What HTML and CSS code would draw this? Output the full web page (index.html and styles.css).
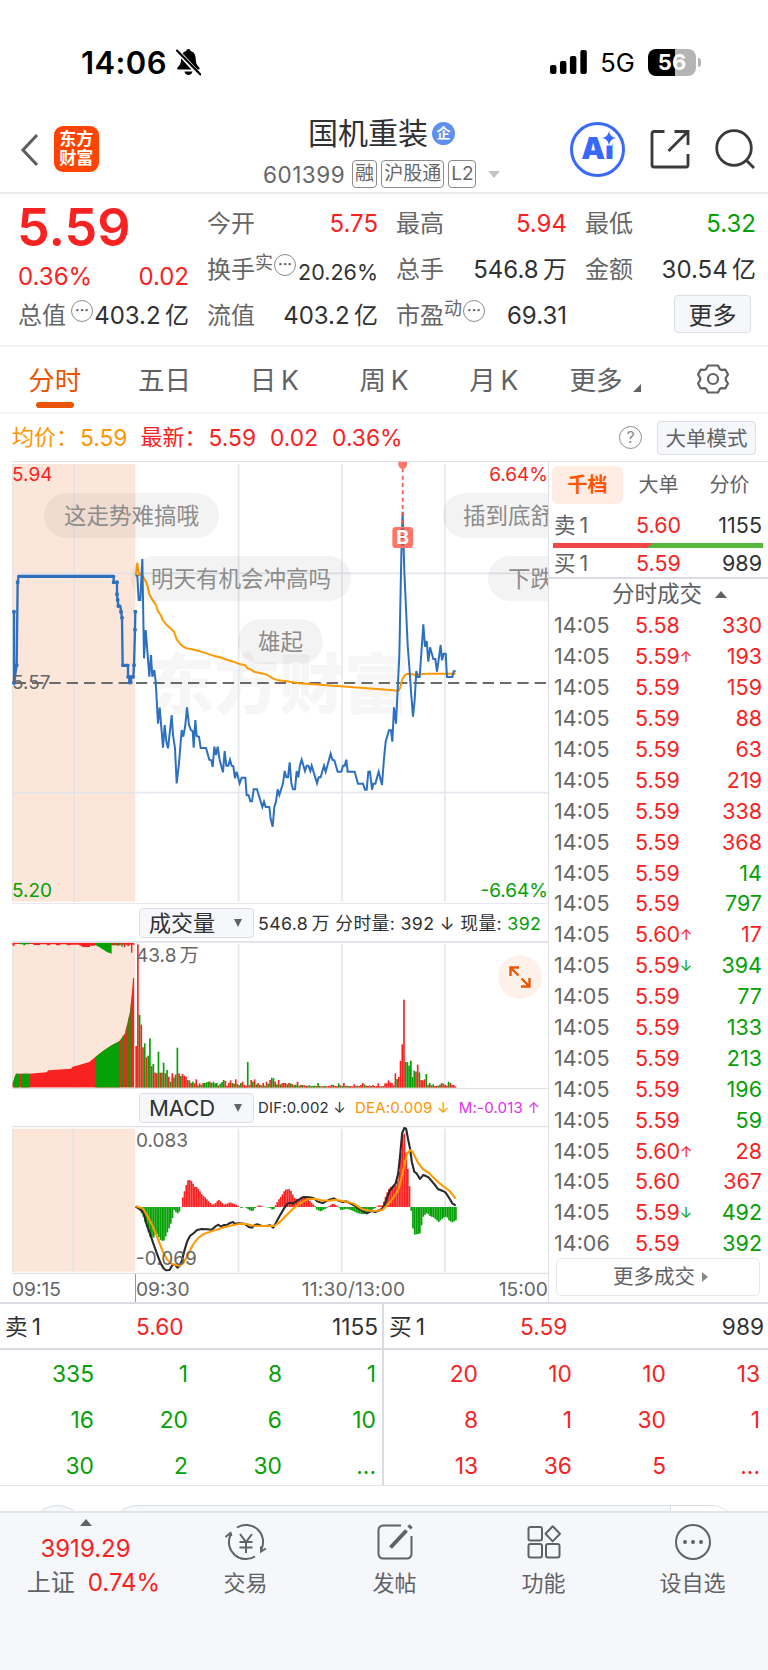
FILE: index.html
```
<!DOCTYPE html>
<html lang="zh-CN">
  <head>
    <meta charset="UTF-8" />
    <meta name="viewport" content="width=device-width, initial-scale=1.0" />
    <title>国机重装 601399</title>
    <link rel="stylesheet" href="styles.css" />
  </head>
  <body>
    <div class="status">
      <span class="time">14:06</span>
      <svg class="bell" width="27" height="28" viewBox="0 0 27 28">
        <path d="M13.5 1c1.3 0 2 .9 2.1 2 3.6 1 5 3.700 5.200 7.500.2 5.200 1.200 6.500 3.600 9 .8.9.4 2-.8 2H3.400c-1.200 0-1.600-1.100-.8-2 2.400-2.500 3.400-3.800 3.600-9C6.400 6.700 7.800 4 11.400 3c.1-1.100.8-2 2.100-2z" />
        <path d="M9.500 23.500h8c-.4 2.300-1.900 3.500-4 3.500s-3.600-1.200-4-3.500z" />
        <path d="M1 1.500 25 27.500" stroke="#fff" stroke-width="4.500" />
        <path d="M2 2.500 25.500 26.500" stroke="#000" stroke-width="2.200" stroke-linecap="round" />
      </svg>
      <svg class="signal" width="38" height="24" viewBox="0 0 38 24">
        <rect x="0" y="15" width="6.500" height="9" rx="2" />
        <rect x="10" y="11" width="6.500" height="13" rx="2" />
        <rect x="20" y="6" width="6.500" height="18" rx="2" />
        <rect x="30.500" y="0" width="6.500" height="24" rx="2" />
      </svg>
      <span class="net">5G</span>
      <span class="battery">56</span>
      <i class="nub"></i>
    </div>

    <header>
      <svg class="back" width="20" height="36" viewBox="0 0 20 36"><path d="M17 3 3 18l14 15" /></svg>
      <div class="logo"><span>东方</span><span>财富</span></div>
      <div class="title">
        <div class="name">国机重装<em>企</em></div>
        <div class="code">601399<b>融</b><b>沪股通</b><b>L2</b><i></i></div>
      </div>
      <div class="tools">
        <div class="ai">
          Ai
          <svg width="16" height="16" viewBox="-1 -1 16 16"><path d="M7 0Q8 6 14 7 8 8 7 14 6 8 0 7 6 6 7 0z" /></svg>
        </div>
        <svg class="line" width="40" height="40" viewBox="0 0 40 40">
          <path d="M14.500 2.500H4a2 2 0 0 0-2 2V36a2 2 0 0 0 2 2h32a2 2 0 0 0 2-2V25M24.500 2.500H38V16M38 2.500 18.500 22" />
        </svg>
        <svg class="line search" width="42" height="42" viewBox="0 0 42 42">
          <circle cx="19" cy="20" r="17.300" /><path d="m31 32 8 8" />
        </svg>
      </div>
    </header>

    <section class="quote">
      <div class="col">
        <div class="big">5.59</div>
        <div class="pair change"><span>0.36%</span><span>0.02</span></div>
        <div class="pair"><label>总值<i class="dots ml">···</i></label><span>403.2&thinsp;亿</span></div>
      </div>
      <div class="col">
        <div class="pair"><label>今开</label><span class="red">5.75</span></div>
        <div class="pair"><label>换手<sup>实</sup><i class="dots">···</i></label><span class="small">20.26%</span></div>
        <div class="pair"><label>流值</label><span>403.2&thinsp;亿</span></div>
      </div>
      <div class="col">
        <div class="pair"><label>最高</label><span class="red">5.94</span></div>
        <div class="pair"><label>总手</label><span>546.8&thinsp;万</span></div>
        <div class="pair"><label>市盈<sup>动</sup><i class="dots">···</i></label><span>69.31</span></div>
      </div>
      <div class="col">
        <div class="pair"><label>最低</label><span class="green">5.32</span></div>
        <div class="pair"><label>金额</label><span>30.54&thinsp;亿</span></div>
        <div class="pair end"><button class="btn more">更多</button></div>
      </div>
    </section>

    <nav class="tabs">
      <a class="active">分时</a>
      <a>五日</a>
      <a>日&thinsp;K</a>
      <a>周&thinsp;K</a>
      <a>月&thinsp;K</a>
      <a>更多<i class="corner"></i></a>
      <a>
        <svg width="32" height="30" viewBox="0 0 32 30">
          <path d="M11 1.500h10l1.800 3.600 1.400.8 4.200-.2 2.600 4.800-2.200 3.300v2.400l2.200 3.300-2.600 4.800-4.200-.2-1.400.8L21 28.500H11l-1.800-3.600-1.400-.8-4.200.2L1 19.500l2.200-3.300v-2.400L1 10.500l2.600-4.800 4.200.2 1.400-.8z" />
          <circle cx="16" cy="15" r="5" />
        </svg>
      </a>
    </nav>

    <div class="info">
      <span class="orange">均价：</span><span class="orange v1">5.59</span>
      <span class="red">最新：</span><span class="red v2">5.59</span><span class="red v3">0.02</span><span class="red v4">0.36%</span>
      <i class="help">?</i>
      <button class="btn mode">大单模式</button>
    </div>

    <main>
      <div class="charts">
        <div class="chart price">
          <svg width="537" height="443" viewBox="36 18 1611 1329">
            <path class="frame" d="M36 19H1647M36 1347H1647" />
            <rect class="auction" x="36" y="27" width="370" height="1313" />
            <text class="mark" x="448" y="758">东方财富</text>
            <path class="grid" d="M37 27V1340M222 27V1340M716 27V1340M1026 27V1340M1335 27V1340M37 355H1645M37 1013H1645" />
            <path class="zero" d="M44 684H1645" />
            <polyline class="avg" points="407,362 412,325 417,360 421,357 427,362 432,370 438,380 443,395 448,418 458,436 468,450 473,467 483,482 488,495 500,510 510,519 522,530 530,553 540,566 550,575 560,580 575,583 600,589 640,602 665,608 675,613 700,620 722,628 736,631 742,640 752,643 762,650 790,656 800,659 820,671 835,676 860,679 897,685 940,688 1040,695 1090,699 1180,706 1195,708 1200,700 1206,675 1212,664 1220,657 1228,656 1245,659 1280,656 1367,656" />
            <polyline class="now pre" points="42,470 42,684 50,631 53,382 56,364 341,364 341,382 351,382 351,418 353,435 355,453 361,453 363,470 366,488 368,631 384,631 384,666 388,666 388,684 393,684 393,666 400,666 402,631 405,524 406,470" />
            <path class="thick" d="M56 364H341M368 631H384M384 666H400M388 682H393" />
            <path class="dot" d="M42 470h0M42 684h0M50 631h0M53 382h0M341 382h0M351 382h0M351 418h0M353 435h0M355 453h0M363 470h0M366 488h0M402 631h0M405 524h0M406 470h0" />
            <polyline class="now" points="407,362 412,362 416,435 421,435 427,312 432,610 437,525 443,600 448,665 453,600 457,665 463,645 467,680 474,806 479,758 489,878 494,810 499,860 504,880 509,835 515,780 519,840 525,880 530,985 537,925 545,825 550,845 556,810 561,757 567,810 573,826 578,828 581,878 586,795 590,843 597,845 602,879 618,879 628,914 634,916 638,936 643,875 648,900 653,875 659,915 669,952 674,888 679,932 685,932 690,914 695,932 700,934 705,970 710,950 719,985 725,968 736,968 740,1021 746,1021 751,1039 756,1039 761,1003 771,1003 787,1056 792,1040 797,1056 808,1056 812,1092 818,1115 823,1056 828,1040 833,1003 838,1020 849,985 854,948 859,967 864,967 869,922 874,985 879,1003 885,1003 890,948 895,967 900,930 905,914 915,948 920,932 925,932 931,948 935,932 946,968 951,985 956,967 962,967 972,932 977,950 992,896 997,914 1003,916 1013,950 1024,950 1029,932 1034,932 1039,914 1043,950 1064,950 1074,986 1089,986 1095,1004 1100,1004 1105,950 1110,950 1116,1004 1120,986 1126,986 1136,950 1146,990 1152,910 1157,860 1167,826 1173,826 1177,860 1182,757 1188,806 1198,600 1204,300 1208,170 1213,350 1223,570 1229,650 1233,710 1239,785 1244,735 1249,648 1253,666 1259,666 1270,508 1275,575 1280,558 1285,620 1290,577 1300,612 1306,612 1311,650 1322,570 1326,616 1331,596 1337,596 1341,666 1357,666 1361,649 1367,649" />
            <g class="buy">
              <path d="M1195 20h26v8a13 13 0 0 1-26 0z" />
              <path class="stem" d="M1208 40V216" />
              <rect x="1177" y="216" width="62" height="63" rx="10" />
              <path class="spike" d="M1208 220V279" />
              <text x="1208" y="268">B</text>
            </g>
          </svg>
          <span class="lab t red">5.94</span>
          <span class="lab m">5.57</span>
          <span class="lab b green">5.20</span>
          <span class="lab t r red">6.64%</span>
          <span class="lab b r green">-6.64%</span>
          <span class="bubble b1">这走势难搞哦</span>
          <span class="bubble b2">明天有机会冲高吗</span>
          <span class="bubble b3">雄起</span>
          <span class="bubble b4">插到底舒</span>
          <span class="bubble b5">下跌</span>
        </div>

        <div class="bar">
          <div class="select">成交量<i></i></div>
          <span class="txt">546.8&thinsp;万 分时量: 392 ↓ 现量: <span class="green">392</span></span>
        </div>

        <div class="chart vol">
          <svg width="537" height="148" viewBox="36 123 1611 444">
            <defs>
              <clipPath id="hill">
                <path d="M37 563V550L48 521H88L140 517 145 511 213 506 218 500 235 496 268 486 287 470 310 452 335 436 358 424 375 400 383 365 390 335 393 305 397 265 399 233H403V563z" />
              </clipPath>
            </defs>
            <rect class="auction" x="36" y="132" width="370" height="431" />
            <path class="grid" d="M37 132V563M222 132V563M716 132V563M1026 132V563M1335 132V563" />
            <g clip-path="url(#hill)">
              <rect class="up" x="36" y="200" width="370" height="363" />
              <path class="down" d="M42 500h15v63H42zM64 500h24v63H64zM286 400h74v163H286zM366 300h3v263h-3zM376 300h3v263h-3zM384 300h2v263h-2zM391 250h3v313h-3z" />
            </g>
            <path class="up" d="M37 128H403V134H397V158H393V134H388V138H382V134H376V142H371V134H362V136H335V134H286V137H270V141H245V137H238V134H212V136H200V133H180V136H168V133H150V136H140V133H120V135H100V132H44V137H38z" />
            <path class="down" d="M286 128H335V161L322 157 308 148 296 140 286 135zM60 128H88V133H76V136H70V133H60zM340 128H344V136H340zM352 128H356V138H352zM364 128H368V140H364z" />
            <g id="vol-bars"></g>
            <path class="frame thick-frame" d="M36 125.500H1647" />
            <path class="frame" d="M36 566H1647" />
          </svg>
          <span class="lab v">43.8&thinsp;万</span>
          <span class="expand">
            <svg width="24" height="24" viewBox="0 0 24 24"><path d="M2.500 11V2.500H11M2.500 2.500l8 8M13 21.500h8.500V13M21.500 21.500l-8-8" /></svg>
          </span>
        </div>

        <div class="bar">
          <div class="select">MACD<i></i></div>
          <span class="tiny">DIF:0.002 ↓</span>
          <span class="tiny orange">DEA:0.009 ↓</span>
          <span class="tiny pink">M:-0.013 ↑</span>
        </div>

        <div class="chart macd">
          <svg width="537" height="148" viewBox="34 108 1503 444" preserveAspectRatio="none">
            <path class="frame" d="M34 109.500H1537M34 550H1537" />
            <rect class="auction" x="34" y="116" width="345" height="429" />
            <path class="grid" d="M35 116V545M206 116V545M668 116V545M957 116V545M1246 116V545" />
            <g id="macd-bars"></g>
            <polyline class="dif" points="380,350 385,353 395,360 402,368 410,400 420,430 430,462 440,492 450,520 458,535 465,541 475,540 483,525 490,524 497,533 503,528 510,510 517,480 524,455 532,438 542,430 552,420 565,417 580,418 593,419 605,408 612,404 618,410 628,405 635,405 642,400 652,396 658,401 668,400 685,401 697,411 706,413 715,404 722,403 733,408 745,408 757,406 765,413 773,398 783,378 795,356 805,341 812,338 820,341 835,330 850,321 865,322 878,324 890,335 903,339 910,336 920,330 935,325 945,331 960,336 970,334 990,345 1010,360 1027,370 1040,363 1050,366 1065,360 1075,350 1083,325 1090,305 1100,290 1108,280 1115,250 1120,200 1126,130 1132,114 1137,116 1143,150 1148,175 1153,215 1160,245 1166,250 1176,267 1185,255 1192,258 1200,262 1210,275 1217,284 1226,297 1240,303 1248,308 1258,325 1267,341 1276,346" />
            <polyline class="avg" points="380,348 390,352 400,355 410,372 425,402 440,440 455,482 468,508 478,520 490,525 503,527 513,520 525,498 540,465 555,444 570,432 590,425 610,418 640,408 670,402 690,402 710,407 740,408 768,408 785,395 800,378 820,357 840,340 860,328 880,326 900,331 920,332 940,329 970,335 990,341 1015,358 1035,362 1050,363 1070,360 1085,345 1100,325 1115,300 1125,260 1132,225 1140,190 1148,180 1155,185 1170,218 1185,238 1200,248 1220,270 1240,288 1258,302 1276,326" />
          </svg>
          <span class="lab v">0.083</span>
          <span class="lab v low">-0.069</span>
        </div>

        <div class="axis"><span>09:15</span><span>09:30</span><span>11:30/13:00</span><span>15:00</span></div>
      </div>

      <aside>
        <div class="side-tabs"><a class="active">千档</a><a>大单</a><a>分价</a></div>
        <div class="lv"><span>卖&thinsp;1</span><span class="red">5.60</span><span>1155</span></div>
        <div class="ratio"></div>
        <div class="lv buy1"><span>买&thinsp;1</span><span class="red">5.59</span><span>989</span></div>
        <div class="deal-title">分时成交<i></i></div>
        <div id="deals"></div>
        <button class="more-deals">更多成交<i></i></button>
      </aside>
    </main>

    <section class="book">
      <div class="half">
        <div class="head"><span>卖&thinsp;1</span><span class="red">5.60</span><span>1155</span></div>
        <div class="cells green">
          <span>335</span><span>1</span><span>8</span><span>1</span>
          <span>16</span><span>20</span><span>6</span><span>10</span>
          <span>30</span><span>2</span><span>30</span><span>...</span>
        </div>
      </div>
      <div class="half">
        <div class="head"><span>买&thinsp;1</span><span class="red">5.59</span><span>989</span></div>
        <div class="cells red">
          <span>20</span><span>10</span><span>10</span><span>13</span>
          <span>8</span><span>1</span><span>30</span><span>1</span>
          <span>13</span><span>36</span><span>5</span><span>...</span>
        </div>
      </div>
    </section>

    <div class="peek"><div class="round"></div><div class="pill"><i></i></div></div>

    <footer>
      <div class="index">
        <i></i>
        <div class="num">3919.29</div>
        <div class="name-row">上证<span>0.74%</span></div>
      </div>
      <div class="item">
        <svg width="44" height="40" viewBox="0 0 44 40">
          <path d="M13 5.500A17 17 0 0 1 37.500 27M31 34.500A17 17 0 0 1 6.500 13M1.500 15l5-4 1 3M37 24.500v5l5-3" />
          <path d="M16 12l6 8 6-8M22 20v11M15.500 20h13M15.500 25.500h13" />
        </svg>
        交易
      </div>
      <div class="item">
        <svg width="40" height="40" viewBox="0 0 40 40">
          <path d="M26 3.500H8a4.500 4.500 0 0 0-4.500 4.500v24A4.500 4.500 0 0 0 8 36.500h24a4.500 4.500 0 0 0 4.500-4.500V14" />
          <path d="M15.500 25.500 31.500 8.500" stroke-width="4" /><path d="m34 6 2-2.200" stroke-width="4.500" />
        </svg>
        发帖
      </div>
      <div class="item">
        <svg width="40" height="40" viewBox="0 0 40 40">
          <rect x="4.500" y="5" width="13.500" height="13.500" rx="2" /><rect x="4.500" y="22" width="13.500" height="13.500" rx="2" /><rect x="22" y="22" width="13.500" height="13.500" rx="2" />
          <path d="M28.700 4.200 36 11.800l-7.300 7.600-7.200-7.600z" stroke-linejoin="round" />
        </svg>
        功能
      </div>
      <div class="item">
        <svg width="40" height="40" viewBox="0 0 40 40">
          <circle cx="20" cy="20" r="17" />
          <path d="M12 20h.01M20 20h.01M28 20h.01" stroke-width="4" stroke-linecap="round" />
        </svg>
        设自选
      </div>
    </footer>
    <script src="script.js"></script>
  </body>
</html>
```
FILE: styles.css
```
* {
  box-sizing: border-box;
}
body {
  margin: 0;
  width: 768px;
  height: 1670px;
  overflow: hidden;
  background: #fff;
  color: #303133;
  font-family: Inter, "Noto Sans CJK SC", sans-serif;
  font-size: 24px;
}
i,
em {
  font-style: normal;
}
button {
  font-family: inherit;
  padding: 0 0 3px;
}
.red {
  color: #f82222;
}
.green {
  color: #05a005;
}
.orange {
  color: #ff9500;
}
.pink {
  color: #e030e8;
}

/* status bar */
.status {
  height: 104px;
  padding: 20px 67px 0 81px;
  display: flex;
  align-items: center;
  color: #000;
}
.time {
  width: 94px;
  font-size: 31px;
  font-weight: 600;
  letter-spacing: 0.4px;
}
.signal {
  margin-left: 349px;
}
.net {
  width: 47px;
  padding-left: 12px;
  font-size: 25.500px;
}
.battery {
  margin-left: 13px;
  width: 48px;
  height: 27px;
  flex: none;
  border-radius: 8px;
  background: linear-gradient(90deg, #000 56%, #b4b4b4 56%);
  color: #fff;
  font-size: 22px;
  font-weight: 700;
  line-height: 27px;
  text-align: center;
}
.nub {
  margin-left: 2px;
  width: 3px;
  height: 9px;
  border-radius: 0 3px 3px 0;
  background: #b4b4b4;
}

/* title bar */
header {
  height: 90px;
  display: flex;
  border-bottom: 2px solid #ebebeb;
}
.back {
  margin: 28px 0 0 20px;
  fill: none;
  stroke: #5c5c5c;
  stroke-width: 3;
}
.logo {
  margin: 22px 0 0 13.500px;
  width: 45.500px;
  height: 46px;
  padding-top: 4px;
  border-radius: 9px;
  background: #ff4400;
  color: #fff;
  font-size: 17px;
  font-weight: 700;
  line-height: 19px;
  text-align: center;
}
.logo span {
  display: block;
}
.title {
  margin-left: 164px;
  width: 289px;
}
.name {
  height: 40px;
  margin: 9px 0 1px 45px;
  display: flex;
  align-items: center;
  font-size: 30px;
  line-height: 40px;
}
.name em {
  margin-left: 4px;
  width: 23px;
  height: 23px;
  border-radius: 50%;
  background: #5f8ff0;
  color: #fff;
  font-size: 14px;
  font-weight: 700;
  line-height: 22px;
  text-align: center;
}
.code {
  height: 40px;
  display: flex;
  align-items: center;
  color: #666;
  font-size: 22.500px;
  letter-spacing: 0.5px;
}
.code b {
  height: 28px;
  margin-left: 4px;
  padding: 0 2px;
  border: 1.500px solid #8c8c8c;
  border-radius: 4px;
  font-size: 19px;
  font-weight: 400;
  letter-spacing: 0;
  line-height: 25px;
}
.code b:first-of-type {
  margin-left: 7px;
}
.code i {
  margin-left: 12px;
  border: 6.500px solid transparent;
  border-top: 7px solid #c4c4c4;
  border-bottom: 0;
}
.tools {
  margin-left: 18px;
  height: 90px;
  display: flex;
  align-items: center;
}
.ai {
  position: relative;
  width: 55px;
  height: 55px;
  border: 3.500px solid #3868ff;
  border-radius: 50%;
  color: #3868ff;
  font-size: 30px;
  font-weight: 900;
  line-height: 47px;
  text-align: center;
}
.ai svg {
  position: absolute;
  left: 28px;
  top: 5px;
  overflow: visible;
  fill: #3868ff;
  stroke: #fff;
  stroke-width: 6;
  paint-order: stroke;
}
.line {
  margin-left: 25px;
  fill: none;
  stroke: #3a3a3c;
  stroke-width: 2.800;
}
.search {
  margin-left: 25px;
}

/* quote numbers */
.quote {
  height: 153px;
  padding: 7px 12px 0 18px;
  display: grid;
  grid-template-columns: repeat(4, 171px);
  justify-content: space-between;
  border-bottom: 2px solid #f3f3f3;
}
.pair {
  height: 46px;
  display: flex;
  align-items: center;
  justify-content: space-between;
  white-space: nowrap;
  line-height: 30px;
}
.pair label {
  display: flex;
  align-items: center;
  color: #666;
}
.pair sup {
  font-size: 18px;
  line-height: 18px;
  margin-top: -14px;
  vertical-align: 0;
}
.pair .small {
  padding-top: 4px;
  font-size: 21.500px;
}
.pair.end {
  justify-content: flex-end;
}
.dots {
  width: 22px;
  height: 22px;
  margin: -10px 0 0 1px;
  border: 1.500px solid #8c8c8c;
  border-radius: 50%;
  font-size: 14px;
  font-weight: 700;
  line-height: 18px;
  text-align: center;
}
.dots.ml {
  margin-left: 5px;
}
.big {
  height: 54px;
  margin: 0 0 5px -1px;
  color: #f82222;
  font-size: 52px;
  font-weight: 600;
  line-height: 54px;
}
.change {
  height: 33px;
  color: #f82222;
}
.btn {
  border: 1.500px solid #dcdee4;
  border-radius: 4px;
  background: #f6f7fa;
  color: #303133;
}
.more {
  width: 77px;
  height: 38px;
  margin: -5px 5px 0 0;
  padding-bottom: 4px;
  font-size: 24px;
}

/* period tabs */
.tabs {
  height: 67px;
  display: flex;
  border-bottom: 2px solid #f3f3f3;
}
.tabs a {
  flex: 1;
  position: relative;
  display: flex;
  align-items: center;
  justify-content: center;
  padding-bottom: 2px;
  color: #606266;
  font-size: 26.5px;
}
.tabs .active {
  color: #ea5504;
}
.tabs .active::after {
  content: "";
  position: absolute;
  left: 36px;
  bottom: 4px;
  width: 38px;
  height: 6px;
  border-radius: 3px;
  background: #ea5504;
}
.corner {
  margin: 19px -4px 0 11px;
  border-left: 8px solid transparent;
  border-bottom: 8px solid #606266;
}
.tabs svg {
  fill: none;
  stroke: #606266;
  stroke-width: 2.200;
  stroke-linejoin: round;
}

.info {
  height: 47px;
  padding: 0 12px;
  display: flex;
  align-items: center;
  font-size: 22px;
  line-height: 30px;
}
.info > span {
  margin-top: -2px;
}
.info .v1,
.info .v2,
.info .v3,
.info .v4 {
  margin-top: 0;
  font-size: 22.800px;
}
.v1 {
  margin: 0 13px 0 2px;
}
.v2 {
  margin: 0 14px 0 2px;
}
.v3 {
  margin-right: 14px;
}
.help {
  margin-left: auto;
  width: 23px;
  height: 23px;
  border: 1.500px solid #8c8c8c;
  border-radius: 50%;
  color: #8c8c8c;
  font-size: 16px;
  line-height: 20px;
  text-align: center;
}
.mode {
  margin-left: 15px;
  width: 99px;
  height: 34px;
  color: #606266;
  font-size: 20.500px;
}

/* charts */
main {
  height: 841px;
  display: flex;
}
.charts {
  width: 549px;
  padding-left: 12px;
  border-right: 1.500px solid #dddfe5;
}
.chart {
  position: relative;
  overflow: hidden;
}
.chart > svg {
  display: block;
}
.price {
  height: 443px;
}
.vol,
.macd {
  height: 148px;
}
.frame {
  stroke: #dfe1e8;
  stroke-width: 4;
}
.thick-frame {
  stroke-width: 6;
}
.auction {
  fill: #fce6da;
}
.grid {
  stroke: #dfe4ec;
  stroke-width: 5;
  opacity: 0.8;
}
.zero {
  stroke: #6a6a6a;
  stroke-width: 6;
  stroke-dasharray: 34 18;
}
.mark {
  font-size: 195px;
  font-weight: 900;
  fill: #f6f6f7;
}
.avg,
.now,
.dif {
  fill: none;
  stroke: #ff9900;
  stroke-width: 6;
  stroke-linejoin: round;
}
.now {
  stroke: #2c70bf;
  stroke-linejoin: miter;
}
.dif {
  stroke: #2a2a2a;
}
.pre {
  stroke-width: 7;
}
.thick {
  stroke: #2c70bf;
  stroke-width: 10;
  stroke-linecap: round;
}
.dot {
  stroke: #2c70bf;
  stroke-width: 12;
  stroke-linecap: round;
}
.buy {
  fill: #ff7666;
}
.buy .stem {
  stroke: #f4544a;
  stroke-width: 5;
  stroke-dasharray: 12 10;
}
.buy .spike {
  stroke: #8b3a66;
  stroke-width: 11;
  stroke-dasharray: 12 8;
  opacity: 0.6;
}
.buy text {
  fill: #fff;
  font-size: 58px;
  font-weight: 700;
  text-anchor: middle;
}
.up {
  fill: #f82222;
}
.down {
  fill: #05a005;
}
.lab {
  position: absolute;
  left: 0;
  color: #666;
  font-size: 19px;
  line-height: 20px;
}
.lab.red {
  color: #f82222;
}
.lab.green {
  color: #05a005;
}
.t {
  top: 4px;
}
.m {
  top: 212px;
}
.b {
  top: 420px;
}
.lab.r {
  left: auto;
  right: 0;
}
.lab.v {
  left: 124px;
  top: 5px;
}
.lab.low {
  top: 123px;
}
.bubble {
  position: absolute;
  height: 45px;
  padding: 0 20px;
  border-radius: 23px;
  background: rgba(80, 80, 80, 0.07);
  color: #8c8c8c;
  font-size: 22.500px;
  line-height: 46px;
  white-space: nowrap;
}
.b1 {
  left: 32px;
  top: 32px;
}
.b2 {
  left: 119px;
  top: 95px;
}
.b3 {
  left: 226px;
  top: 158px;
}
.b4 {
  left: 431px;
  top: 32px;
}
.b5 {
  left: 476px;
  top: 95px;
}
.bar {
  height: 37px;
  padding-left: 127px;
  display: flex;
  align-items: center;
  white-space: nowrap;
}
.select {
  width: 115px;
  height: 30px;
  margin-right: 4px;
  padding: 0 11px 0 9px;
  flex: none;
  display: flex;
  align-items: center;
  justify-content: space-between;
  border: 1.500px solid #dcdee4;
  border-radius: 4px;
  background: #f6f7fa;
  font-size: 22px;
  line-height: 28px;
}
.select i {
  border: 4.500px solid transparent;
  border-top: 8px solid #606266;
  border-bottom: 0;
}
.txt {
  margin-top: -2px;
  font-size: 17.800px;
  letter-spacing: 0.350px;
}
.tiny {
  margin-right: 9px;
  font-size: 15px;
  letter-spacing: 0.2px;
}
.expand {
  position: absolute;
  right: 6px;
  top: 14px;
  width: 44px;
  height: 44px;
  padding: 10px;
  border-radius: 50%;
  background: #fef1ea;
}
.expand svg {
  display: block;
  fill: none;
  stroke: #ea5504;
  stroke-width: 2.400;
}
.axis {
  height: 28px;
  display: flex;
  color: #666;
  font-size: 19.200px;
  line-height: 30px;
}
.axis span:first-child {
  width: 124px;
  border-right: 1.500px solid #999;
}
.axis span:nth-child(3) {
  margin-left: auto;
  margin-right: auto;
  padding-left: 19px;
  letter-spacing: 0.2px;
}

/* right side list */
aside {
  flex: 1;
  border-top: 1px solid #e2e4ea;
}
.side-tabs {
  height: 46px;
  padding: 4px 0 0 3px;
  display: flex;
}
.side-tabs a {
  width: 71px;
  height: 38px;
  color: #606266;
  font-size: 20px;
  line-height: 38px;
  text-align: center;
}
.side-tabs .active {
  border-radius: 6px;
  background: #ffece3;
  color: #ff5500;
  font-weight: 700;
}
.lv {
  height: 35px;
  padding: 0 6px 1px 5px;
  display: grid;
  grid-template-columns: 82px 60px 1fr;
  align-items: center;
  color: #606266;
  font-size: 21.500px;
  line-height: 30px;
}
.lv span:last-child {
  color: #303133;
  text-align: right;
}
.ratio {
  height: 5px;
  margin: 0 5px 0 4px;
  background: linear-gradient(130deg, #ee4848 46.300%, #58b83e 46.300%);
}
.buy1 {
  height: 29px;
  padding-bottom: 0;
}
.deal-title {
  height: 33px;
  padding: 0 0 1px 63px;
  display: flex;
  align-items: center;
  border-top: 2px solid #d9dbe2;
  color: #606266;
  font-size: 22.500px;
  line-height: 28px;
}
.deal-title i {
  margin: 1px 0 0 13px;
  border: 6px solid transparent;
  border-bottom: 7px solid #606266;
  border-top: 0;
}
.deal {
  height: 30.900px;
  padding: 0 6px 0 5px;
  display: grid;
  grid-template-columns: 81px 61px 1fr;
  align-items: center;
  font-size: 21.500px;
  white-space: nowrap;
}
.deal .clock {
  color: #666;
}
.deal span:last-child {
  text-align: right;
}
.deal small {
  font-size: 15px;
  vertical-align: 2px;
}
.more-deals {
  display: flex;
  width: 204px;
  height: 38px;
  margin: -1px 0 0 7px;
  padding-left: 56px;
  align-items: center;
  border: 1.500px solid #e8e8ea;
  border-radius: 5px;
  background: #fff;
  color: #606266;
  font-size: 20.500px;
}
.more-deals i {
  margin: 3px 0 0 7px;
  border: 5px solid transparent;
  border-left: 6px solid #888;
  border-right: 0;
}

/* order book */
.book {
  height: 184px;
  display: flex;
  border-top: 2px solid #d9dbe2;
  border-bottom: 1.500px solid #e2e4ea;
}
.half {
  width: 384px;
}
.half:first-child {
  border-right: 2px solid #d9dbe2;
}
.head {
  height: 46px;
  padding: 1px 4px 0 5px;
  display: grid;
  grid-template-columns: 131px 100px 1fr;
  align-items: center;
  border-bottom: 2px solid #d9dbe2;
  font-size: 22.700px;
  line-height: 30px;
}
.head span:last-child {
  text-align: right;
}
.cells {
  display: grid;
  grid-template-columns: repeat(4, 94px);
  grid-auto-rows: 46px;
  align-items: center;
  text-align: right;
  font-size: 22.800px;
  line-height: 27px;
}
.peek {
  height: 25px;
  padding: 19px 29px 0;
  display: flex;
  gap: 23px;
  overflow: hidden;
}
.peek .round {
  width: 57px;
  height: 57px;
  flex: none;
  border: 1.500px solid #dcdee4;
  border-radius: 50%;
  background: #f6f7fa;
}
.peek .pill {
  width: 630px;
  height: 57px;
  border: 1.500px solid #dcdee4;
  border-radius: 29px;
  background: #f6f7fa;
  overflow: hidden;
}
.pill i {
  display: block;
  height: 57px;
  margin-left: 560px;
  border-left: 1.500px solid #dcdee4;
  background: #fff;
}

/* bottom menu */
footer {
  height: 160px;
  display: flex;
  border-top: 2px solid #e3e4e7;
  background: #f6f7fa;
  color: #606266;
}
.index {
  width: 171px;
  line-height: 34px;
  text-align: center;
}
.index > i {
  display: block;
  width: 12px;
  margin: 6px auto 6px;
  border: 6px solid transparent;
  border-bottom: 7px solid #606266;
  border-top: 0;
}
.index .num,
.index span {
  color: #f82222;
}
.index .name-row {
  padding-left: 16px;
}
.index span {
  margin-left: 13px;
}
.item {
  width: 149px;
  padding-top: 9px;
  display: flex;
  flex-direction: column;
  align-items: center;
  font-size: 22px;
  line-height: 42px;
}
.item svg {
  fill: none;
  stroke: #606266;
  stroke-width: 2;
}
```
FILE: script.js
```
// height of each minute bar, minus = green
const volumes = [
  125, 430, -218, 189, 121, -133, 91, -96, -148, 65, -71, 45, 43, -108, 45, -45, -75, 43, -53, 33, -18, 43, -31, 39, -120, 43,
  -35, 41, 36, 33, 23, -22, 14, -18, 13, 25, -7, 13, -9, 14, -14, -16, -18, 18, -14, -18, -13, -14, 7, -12, -17, -23, 20, 6,
  14, 22, -14, 12, 25, -11, 7, -14, 18, 9, 6, -77, 8, 23, -18, 25, -10, 14, -9, 7, 14, -6, 18, -12, 23, -30, -28, 18, -10, 23,
  -10, 13, 14, 14, -10, 14, -13, 11, -7, -9, 18, -6, 8, -8, 7, 6, -6, -7, 5, -5, -6, 5, -14, 5, -4, 5, -5, 4, 5, 6, -9, 8, 5,
  5, -13, 7, -5, 14, -5, 6, -5, 5, 4, 10, -5, 6, 5, 8, 14, -10, 6, 5, 7, -5, 8, 5, 5, 13, 4, -5, 5, 13, 13, 22, 16, 14, 7,
  43, -26, 32, 81, 130, 264, -77, -77, -66, -81, -32, -51, 48, 69, -46, 23, 22, 25, -41, 8, -14, 7, -10, 5, 6, -6, 9, -14, 12,
  8, 6, -18, 14, 8, 8, 4,
];

// [x, height] turning points of the macd histogram
const macd = [
  [380, 0], [390, -8], [400, -25], [410, -58], [420, -90], [430, -92], [438, -78], [450, -100], [458, -103], [465, -85],
  [475, -60], [482, -38], [488, -8], [494, -18], [500, -20], [507, 0], [512, 30], [520, 60], [525, 80], [532, 81], [538, 76],
  [545, 60], [552, 60], [565, 38], [575, 28], [585, 16], [595, 6], [605, 13], [612, 22], [620, 15], [627, 7], [645, 14],
  [665, 5], [675, -3], [685, 0], [700, -10], [707, -14], [713, -4], [725, 6], [735, 1], [755, -2], [765, -10], [771, 5],
  [780, 22], [790, 37], [798, 52], [812, 54], [818, 40], [826, 24], [835, 24], [845, 32], [855, 32], [865, 20], [875, 10],
  [882, 2], [887, -8], [897, -13], [912, -5], [918, 0], [932, 11], [942, 5], [948, 0], [955, -10], [970, -5], [985, -10],
  [1000, -18], [1015, -22], [1030, -17], [1050, -3], [1060, 5], [1070, 5], [1075, 18], [1082, 40], [1090, 58], [1110, 66],
  [1117, 100], [1122, 160], [1127, 215], [1132, 220], [1137, 160], [1142, 110], [1147, 55], [1151, -10], [1155, -60],
  [1160, -83], [1175, -80], [1180, -55], [1185, -28], [1195, -18], [1205, -28], [1215, -32], [1228, -45], [1240, -33],
  [1250, -28], [1258, -42], [1267, -46], [1275, -40], [1282, -38],
];

function bar(x, base, h, w) {
  const y = h > 0 ? base - h : base;
  return `<rect class="${h > 0 ? "up" : "down"}" x="${x}" y="${y}" width="${w}" height="${Math.abs(h)}" />`;
}

document.querySelector("#vol-bars").innerHTML = volumes
  .map((v, i) => {
    const rect = bar(406 + i * 5.15, 563, Math.abs(v), 5);
    return v < 0 ? rect.replace("up", "down") : rect;
  })
  .join("");

let bars = "";
for (let x = 382, k = 0; x < 1279; x += 4.807) {
  while (macd[k + 1][0] < x) k++;
  const [x0, h0] = macd[k];
  const [x1, h1] = macd[k + 1];
  bars += bar(x - 2, 351, h0 + ((h1 - h0) * (x - x0)) / (x1 - x0), 4.7);
}
document.querySelector("#macd-bars").innerHTML = bars;

// price, volume, volume color, arrow
const deals = [
  ["5.58", 330, "red"],
  ["5.59", 193, "red", "↑"],
  ["5.59", 159, "red"],
  ["5.59", 88, "red"],
  ["5.59", 63, "red"],
  ["5.59", 219, "red"],
  ["5.59", 338, "red"],
  ["5.59", 368, "red"],
  ["5.59", 14, "green"],
  ["5.59", 797, "green"],
  ["5.60", 17, "red", "↑"],
  ["5.59", 394, "green", "↓"],
  ["5.59", 77, "green"],
  ["5.59", 133, "green"],
  ["5.59", 213, "green"],
  ["5.59", 196, "green"],
  ["5.59", 59, "green"],
  ["5.60", 28, "red", "↑"],
  ["5.60", 367, "red"],
  ["5.59", 492, "green", "↓"],
  ["5.59", 392, "green"],
];

document.querySelector("#deals").innerHTML = deals
  .map(
    ([price, count, color, arrow = ""], i) => `<div class="deal">
      <span class="clock">${i === 20 ? "14:06" : "14:05"}</span>
      <span class="red">${price}<small class="${color}">${arrow}</small></span>
      <span class="${color}">${count}</span>
    </div>`
  )
  .join("");
```
